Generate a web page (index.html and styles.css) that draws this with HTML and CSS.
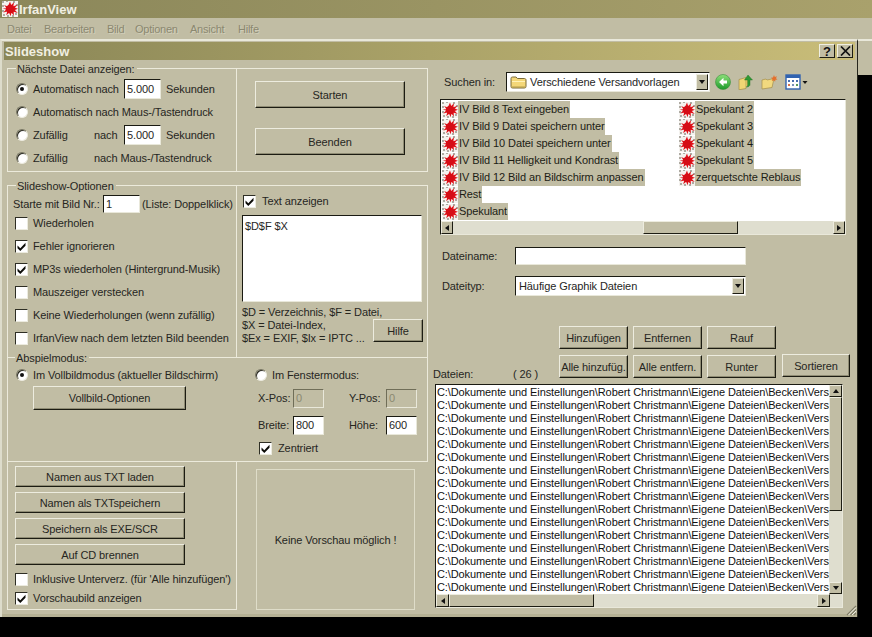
FILE: index.html
```html
<!DOCTYPE html>
<html lang="de">
<head>
<meta charset="utf-8">
<title>IrfanView Slideshow</title>
<link rel="stylesheet" href="styles.css">
</head>
<body>
<svg class="defs" width="0" height="0" aria-hidden="true">
  <defs>
    <symbol id="splat" viewBox="0 0 16 16">
      <rect width="16" height="16" fill="#f4f2ee"/>
      <path fill="#aeaaa2" d="M0 0h2v2H0zM4 0h2v1H4zM11 0h2v2h-2zM14 3h2v2h-2zM0 4h2v2H0zM0 9h2v2H0zM1 13h2v2H1zM13 12h2v2h-2zM5 14h2v2H5zM10 14h2v2h-2z"/>
      <path fill="#e0121a" d="M8 0.500l1.200 3.500 2.800-2.800-.6 4 4-1.400-2.400 3 2.900.9-3 1.200 2.800 3.200-4-1.400.2 3.800-2.400-2.800-1 3.500-1.300-3.500-3 2.600 1-3.800-3.900.9 2.800-2.800L.6 7.600l3.900-.3-2.400-3.400 3.700 1.600z"/>
      <circle cx="8" cy="8" r="4.200" fill="#d50d16"/>
    </symbol>
    <symbol id="tick" viewBox="0 0 11 11">
      <path d="M1.500 4.500l2.800 2.700L9.500 1.800v3L4.300 10 1.500 7.300z" fill="#0c0c08"/>
    </symbol>
    <symbol id="folder" viewBox="0 0 17 16">
      <path d="M1 4.500c0-1 .6-1.500 1.500-1.500h3.600l1.300 1.500h7c.9 0 1.600.6 1.600 1.500v6.500c0 1-.7 1.500-1.600 1.500h-12C1.600 14 1 13.500 1 12.500z" fill="#f4d778" stroke="#7a6a38"/>
      <path d="M2 7h13v1H2z" fill="#fff2b8"/>
      <path d="M2 12.500h13v1H2z" fill="#b39a4a"/>
    </symbol>
  </defs>
</svg>

<div class="screen">
  <header class="appbar">
    <svg class="appicon"><use href="#splat"/></svg>
    <span class="apptitle">IrfanView</span>
  </header>
  <nav class="menu">
    <span class="m-datei">Datei</span>
    <span class="m-bearbeiten">Bearbeiten</span>
    <span class="m-bild">Bild</span>
    <span class="m-optionen">Optionen</span>
    <span class="m-ansicht">Ansicht</span>
    <span>Hilfe</span>
  </nav>

  <div class="stage">
    <section class="dialog">
      <div class="dlgtitle">
        <span class="dlgname">Slideshow</span>
        <div class="dlgbtns">
          <span class="capbtn">?</span>
          <span class="capbtn capx">
            <svg width="11" height="10" viewBox="0 0 11 10"><path d="M1 0.500l9 9M10 0.500l-9 9" stroke="#111" stroke-width="1.700"/></svg>
          </span>
        </div>
      </div>

      <div class="dlgbody">
        <div class="leftcol">
          <!-- Naechste Datei -->
          <div class="group g-next">
            <span class="legend">Nächste Datei anzeigen:</span>
            <div class="cell-l next-rows">
              <div class="row"><span class="radio on"></span><span class="t w91">Automatisch nach</span><span class="field w37">5.000</span><span class="t ml5">Sekunden</span></div>
              <div class="row"><span class="radio"></span><span class="t">Automatisch nach Maus-/Tastendruck</span></div>
              <div class="row"><span class="radio"></span><span class="t w61">Zufällig</span><span class="t w30">nach</span><span class="field w37">5.000</span><span class="t ml5">Sekunden</span></div>
              <div class="row"><span class="radio"></span><span class="t w61">Zufällig</span><span class="t">nach Maus-/Tastendruck</span></div>
            </div>
            <div class="cell-r next-btns">
              <button class="btn big">Starten</button>
              <button class="btn big">Beenden</button>
            </div>
          </div>

          <!-- Optionen -->
          <div class="group g-opts">
            <span class="legend">Slideshow-Optionen</span>
            <div class="cell-l opts-l">
              <div class="startrow"><span class="t w90">Starte mit Bild Nr.:</span><span class="field w37 tall18">1</span><span class="t ml2">(Liste: Doppelklick)</span></div>
              <div class="checks">
                <label class="row"><span class="check"></span><span class="t">Wiederholen</span></label>
                <label class="row"><span class="check"><svg><use href="#tick"/></svg></span><span class="t">Fehler ignorieren</span></label>
                <label class="row"><span class="check"><svg><use href="#tick"/></svg></span><span class="t">MP3s wiederholen (Hintergrund-Musik)</span></label>
                <label class="row"><span class="check"></span><span class="t">Mauszeiger verstecken</span></label>
                <label class="row"><span class="check"></span><span class="t">Keine Wiederholungen (wenn zufällig)</span></label>
                <label class="row"><span class="check"></span><span class="t">IrfanView nach dem letzten Bild beenden</span></label>
              </div>
            </div>
            <div class="cell-r opts-r">
              <label class="row textcheck"><span class="check"><svg><use href="#tick"/></svg></span><span class="t">Text anzeigen</span></label>
              <div class="textarea">$D$F $X</div>
              <div class="helprow">
                <div class="helptext">
                  <div>$D = Verzeichnis, $F = Datei,</div>
                  <div>$X = Datei-Index,</div>
                  <div>$Ex = EXIF, $Ix = IPTC ...</div>
                </div>
                <button class="btn hilfe">Hilfe</button>
              </div>
            </div>
          </div>

          <!-- Abspielmodus -->
          <div class="group g-play">
            <span class="legend legend-play">Abspielmodus:</span>
            <div class="play-l">
              <div class="row"><span class="radio on"></span><span class="t">Im Vollbildmodus (aktueller Bildschirm)</span></div>
              <button class="btn vollbild">Vollbild-Optionen</button>
            </div>
            <div class="play-r">
              <div class="row fenster"><span class="radio"></span><span class="t">Im Fenstermodus:</span></div>
              <div class="posgrid">
                <span class="t">X-Pos:</span><span class="field off">0</span>
                <span class="t second">Y-Pos:</span><span class="field off">0</span>
                <span class="t">Breite:</span><span class="field">800</span>
                <span class="t second">Höhe:</span><span class="field">600</span>
              </div>
              <label class="row zentriert"><span class="check"><svg><use href="#tick"/></svg></span><span class="t">Zentriert</span></label>
            </div>
          </div>

          <!-- Unten -->
          <div class="lower">
            <div class="group g-files">
              <button class="btn wide">Namen aus TXT laden</button>
              <button class="btn wide">Namen als TXTspeichern</button>
              <button class="btn wide">Speichern als EXE/SCR</button>
              <button class="btn wide">Auf CD brennen</button>
              <div class="filechecks">
                <label class="row"><span class="check"></span><span class="t">Inklusive Unterverz. (für 'Alle hinzufügen')</span></label>
                <label class="row"><span class="check"><svg><use href="#tick"/></svg></span><span class="t">Vorschaubild anzeigen</span></label>
              </div>
            </div>
            <div class="preview">Keine Vorschau möglich !</div>
          </div>
        </div>

        <div class="rightcol">
          <div class="searchrow">
            <span class="t searchlabel">Suchen in:</span>
            <div class="combo searchcombo">
              <svg class="cfolder"><use href="#folder"/></svg>
              <span class="t">Verschiedene Versandvorlagen</span>
              <span class="sbtn cbtn"><i class="tri down"></i></span>
            </div>
            <div class="tools">
              <svg class="tool" viewBox="0 0 16 16" width="16" height="16">
                <defs><linearGradient id="gr" x1="0" y1="0" x2="0" y2="1"><stop offset="0" stop-color="#8ee07a"/><stop offset="1" stop-color="#1c9a2a"/></linearGradient></defs>
                <circle cx="8" cy="8" r="7.500" fill="url(#gr)" stroke="#3c8f3c" stroke-width=".6"/>
                <path d="M8.500 3.800L4 8l4.500 4.200V9.600H12V6.400H8.500z" fill="#fff"/>
              </svg>
              <svg class="tool" viewBox="0 0 16 16" width="16" height="16">
                <path d="M1 5.500l7-2v11l-7 1.300z" fill="#f0d674" stroke="#a38e4a" stroke-width=".7"/>
                <path d="M8 3.500h3v8.500H8z" fill="#dcc060"/>
                <path d="M10 1l4.500 5H12v4.500c0 1.500-1.500 2.500-3.500 2.500 1-.8 1.200-1.500 1.200-2.500V6H6.500z" fill="#2f9a34" stroke="#1d6d22" stroke-width=".4"/>
              </svg>
              <svg class="tool" viewBox="0 0 17 16" width="17" height="16">
                <path d="M1 6l4-1 1 1 7-1.500-2 9L1 15z" fill="#f1d97f" stroke="#a38e4a" stroke-width=".7"/>
                <path d="M13 1l.8 2 2.100-.8-.9 2 1.500 1.300-2.100.3-.3 2-1.300-1.500-2 .8.6-2-1.500-1.300 2.100-.2z" fill="#e4702c"/>
              </svg>
              <svg class="views" viewBox="0 0 23 16" width="23" height="16">
                <rect x="1" y="1" width="14" height="14" fill="#fff" stroke="#3163b0" stroke-width="1.400"/>
                <rect x="1" y="1" width="14" height="3" fill="#3163b0"/>
                <path fill="#4a6fb0" d="M3 6h2v2H3zM7 6h2v2H7zM11 6h2v2h-2z"/>
                <path fill="#d8704a" d="M3 10h2v2H3z"/><path fill="#7a90b8" d="M7 10h2v2H7z"/><path fill="#5a9c5a" d="M11 10h2v2h-2z"/>
                <path d="M17.500 7h5l-2.500 3z" fill="#111"/>
              </svg>
            </div>
          </div>

          <div class="filelist">
            <div class="items">
              <div class="item"><svg><use href="#splat"/></svg><span>IV Bild 8 Text eingeben</span></div>
              <div class="item"><svg><use href="#splat"/></svg><span>IV Bild 9 Datei speichern unter</span></div>
              <div class="item"><svg><use href="#splat"/></svg><span>IV Bild 10 Datei speichern unter</span></div>
              <div class="item"><svg><use href="#splat"/></svg><span>IV Bild 11 Helligkeit und Kondrast</span></div>
              <div class="item"><svg><use href="#splat"/></svg><span>IV Bild 12 Bild an Bildschirm anpassen</span></div>
              <div class="item"><svg><use href="#splat"/></svg><span>Rest</span></div>
              <div class="item"><svg><use href="#splat"/></svg><span>Spekulant</span></div>
              <div class="item"><svg><use href="#splat"/></svg><span>Spekulant 2</span></div>
              <div class="item"><svg><use href="#splat"/></svg><span>Spekulant 3</span></div>
              <div class="item"><svg><use href="#splat"/></svg><span>Spekulant 4</span></div>
              <div class="item"><svg><use href="#splat"/></svg><span>Spekulant 5</span></div>
              <div class="item"><svg><use href="#splat"/></svg><span>zerquetschte Reblaus</span></div>
            </div>
            <div class="hbar">
              <span class="sbtn"><i class="tri left"></i></span>
              <span class="track t-a"></span>
              <span class="thumb th-a"></span>
              <span class="track"></span>
              <span class="sbtn"><i class="tri right"></i></span>
            </div>
          </div>

          <div class="namerow"><span class="t namelabel">Dateiname:</span><span class="field namefield"></span></div>
          <div class="typerow">
            <span class="t namelabel">Dateityp:</span>
            <div class="combo typecombo"><span class="t">Häufige Graphik Dateien</span><span class="sbtn cbtn"><i class="tri down"></i></span></div>
          </div>

          <div class="btnrow1">
            <button class="btn act">Hinzufügen</button>
            <button class="btn act">Entfernen</button>
            <button class="btn act">Rauf</button>
          </div>
          <div class="btnrow2">
            <div class="filecount"><span class="t">Dateien:</span><span class="t">( 26 )</span></div>
            <button class="btn act">Alle hinzufüg.</button>
            <button class="btn act">Alle entfern.</button>
            <button class="btn act">Runter</button>
            <button class="btn sort">Sortieren</button>
          </div>

          <div class="pathlist">
            <div class="pathmain">
              <div class="paths">
                <div>C:\Dokumente und Einstellungen\Robert Christmann\Eigene Dateien\Becken\Versandvorlagen</div>
                <div>C:\Dokumente und Einstellungen\Robert Christmann\Eigene Dateien\Becken\Versandvorlagen</div>
                <div>C:\Dokumente und Einstellungen\Robert Christmann\Eigene Dateien\Becken\Versandvorlagen</div>
                <div>C:\Dokumente und Einstellungen\Robert Christmann\Eigene Dateien\Becken\Versandvorlagen</div>
                <div>C:\Dokumente und Einstellungen\Robert Christmann\Eigene Dateien\Becken\Versandvorlagen</div>
                <div>C:\Dokumente und Einstellungen\Robert Christmann\Eigene Dateien\Becken\Versandvorlagen</div>
                <div>C:\Dokumente und Einstellungen\Robert Christmann\Eigene Dateien\Becken\Versandvorlagen</div>
                <div>C:\Dokumente und Einstellungen\Robert Christmann\Eigene Dateien\Becken\Versandvorlagen</div>
                <div>C:\Dokumente und Einstellungen\Robert Christmann\Eigene Dateien\Becken\Versandvorlagen</div>
                <div>C:\Dokumente und Einstellungen\Robert Christmann\Eigene Dateien\Becken\Versandvorlagen</div>
                <div>C:\Dokumente und Einstellungen\Robert Christmann\Eigene Dateien\Becken\Versandvorlagen</div>
                <div>C:\Dokumente und Einstellungen\Robert Christmann\Eigene Dateien\Becken\Versandvorlagen</div>
                <div>C:\Dokumente und Einstellungen\Robert Christmann\Eigene Dateien\Becken\Versandvorlagen</div>
                <div>C:\Dokumente und Einstellungen\Robert Christmann\Eigene Dateien\Becken\Versandvorlagen</div>
                <div>C:\Dokumente und Einstellungen\Robert Christmann\Eigene Dateien\Becken\Versandvorlagen</div>
                <div>C:\Dokumente und Einstellungen\Robert Christmann\Eigene Dateien\Becken\Versandvorlagen</div>
                <div>C:\Dokumente und Einstellungen\Robert Christmann\Eigene Dateien\Becken\Versandvorlagen</div>
              </div>
              <div class="vbar">
                <span class="sbtn"><i class="tri up"></i></span>
                <span class="thumb th-v"></span>
                <span class="track"></span>
                <span class="sbtn"><i class="tri down"></i></span>
              </div>
            </div>
            <div class="hbar hbar2">
              <span class="sbtn"><i class="tri left"></i></span>
              <span class="thumb th-b"></span>
              <span class="track"></span>
              <span class="sbtn"><i class="tri right"></i></span>
              <span class="corner"></span>
            </div>
          </div>
        </div>
      </div>
      <svg class="grip" width="11" height="11" viewBox="0 0 11 11">
        <path d="M10 1L1 10M10 4.500L4.500 10M10 8l-2 2" stroke="#7f7c66" stroke-width="1.200"/>
        <path d="M10 2.500L2.500 10M10 6l-4 4" stroke="#efeee2" stroke-width="1"/>
      </svg>
    </section>
    <div class="backdrop"></div>
  </div>
</div>
</body>
</html>
```

FILE: styles.css
```css
* { box-sizing: border-box; }
html, body { margin: 0; padding: 0; background: #000; }
.defs { position: absolute; }
body { font-family: "Liberation Sans", Arial, sans-serif; font-size: 11px; letter-spacing: -0.1px; color: #26261e; }

.screen { width: 872px; height: 637px; background: #000; overflow: hidden; display: flex; flex-direction: column; }

.appbar { height: 18px; display: flex; align-items: center; padding-left: 2px; background: linear-gradient(90deg, #8b875a, #a9a16c); }
.appicon { width: 16px; height: 16px; flex: none; }
.apptitle { margin-left: 1px; font-weight: bold; font-size: 13px; letter-spacing: 0; color: #f1efe2; }

.menu { height: 21px; display: flex; align-items: center; padding-left: 7px; background: #c1bda4; color: #8b8870; letter-spacing: -0.25px; }
.menu span { text-shadow: 1px 1px 0 #d2cfba; }
.m-datei { width: 37px; }
.m-bearbeiten { width: 63px; }
.m-bild { width: 28px; }
.m-optionen { width: 55px; }
.m-ansicht { width: 48px; }

.stage { flex: 1; display: flex; align-items: flex-start; }
.dialog { position: relative; width: 858px; height: 578px; flex: none; background: #c1bda4; border-top: 2px solid #e9e8da; border-left: 2px solid #dddccb; border-right: 1px solid #26261c; box-shadow: inset 0 -3px 0 #b5b194; }
.backdrop { flex: 1; height: 36px; background: #c1bda4; border-top: 2px solid #e9e8da; }

.dlgtitle { height: 18px; margin: 1px 2px 0 2px; display: flex; align-items: center; justify-content: space-between; padding-left: 1px; background: linear-gradient(90deg, #8b8757, #c9bd79); }
.dlgname { font-weight: bold; font-size: 13px; letter-spacing: 0; color: #f1efe2; }
.dlgbtns { display: flex; gap: 2px; margin-right: 2px; }
.capbtn { width: 16px; height: 14px; display: flex; align-items: center; justify-content: center; background: #c1bda4; border: 1px solid; border-color: #efeee2 #1e1e14 #1e1e14 #efeee2; font-weight: bold; font-size: 13px; color: #111; }

.dlgbody { display: flex; align-items: flex-start; }
.leftcol { width: 421px; flex: none; margin-left: 5px; padding-top: 8px; }
.rightcol { width: 425px; flex: none; margin-left: 5px; }

.group { position: relative; display: flex; border: 1px solid #eceadb; }
.legend { position: absolute; left: 8px; top: -6px; padding: 0 2px 0 1px; height: 13px; line-height: 13px; background: #c1bda4; white-space: nowrap; }
.legend-play { left: 7px; }
.t { white-space: nowrap; line-height: 13px; flex: none; }
.cell-l { width: 229px; flex: none; border-right: 1px solid #eceadb; }
.cell-r { flex: 1; }

.row { display: flex; align-items: center; height: 22px; }
.radio { width: 12px; height: 12px; flex: none; margin-right: 5px; border-radius: 50%; background: #fff; border: 1px solid; border-color: #767460 #ecebdf #ecebdf #767460; box-shadow: inset 1px 1px 0 #2a2a20; display: flex; align-items: center; justify-content: center; }
.radio.on::after { content: ""; width: 4px; height: 4px; border-radius: 50%; background: #111; }
.check { width: 13px; height: 13px; flex: none; margin-right: 5px; background: #fff; border: 1px solid; border-color: #2e2e24 #ecebdf #ecebdf #2e2e24; display: flex; align-items: center; justify-content: center; }
.check svg { width: 11px; height: 11px; }
.field { display: block; flex: none; height: 20px; padding-left: 2px; line-height: 18px; background: #fff; border: 1px solid; border-color: #1a1a12 #e9e8da #e9e8da #1a1a12; }
.field.off { background: #c1bda4; color: #8b8870; border-color: #706e58 #e9e8da #e9e8da #706e58; }

.w91 { width: 91px; } .w61 { width: 61px; } .w30 { width: 30px; } .w37 { width: 37px; } .w90 { width: 90px; }
.ml5 { margin-left: 5px; } .ml2 { margin-left: 2px; }
.tall18 { height: 18px; line-height: 16px; }

.btn { display: block; flex: none; padding: 0; margin: 0; font: inherit; letter-spacing: inherit; color: #26261e; white-space: nowrap; background: #c1bda4; border: 1px solid; border-color: #edecdf #1c1c12 #1c1c12 #edecdf; box-shadow: inset -1px -1px 0 #8f8c74; }

/* group 1 */
.g-next { height: 104px; }
.next-rows { padding: 9px 0 0 8px; display: grid; grid-auto-rows: 22px; row-gap: 1px; align-content: start; }
.next-btns { padding: 12px 0 0 18px; display: flex; flex-direction: column; gap: 20px; }
.big { width: 150px; height: 27px; }

/* group 2 */
.g-opts { height: 172px; margin-top: 13px; border-bottom: 0; }
.opts-l { padding: 9px 0 0 5px; }
.startrow { display: flex; align-items: center; height: 18px; }
.checks { margin: -1px 0 0 2px; display: grid; grid-auto-rows: 23px; }
.checks .row { height: 23px; }
.opts-r { padding: 6px 0 0 5px; }
.textcheck { height: 18px; margin-left: 1px; }
.textcheck .check { margin-right: 6px; }
.textarea { width: 180px; height: 87px; margin-top: 5px; padding: 4px 2px; background: #fff; border: 1px solid; border-color: #1a1a12 #e9e8da #e9e8da #1a1a12; }
.helprow { display: flex; }
.helptext { width: 131px; flex: none; margin-top: 4px; line-height: 13px; white-space: nowrap; }
.hilfe { width: 50px; height: 23px; margin-top: 17px; }

/* group 3 */
.g-play { height: 105px; }
.play-l { width: 247px; flex: none; padding: 8px 0 0 8px; }
.play-l .row { height: 18px; }
.vollbild { width: 153px; height: 24px; margin: 2px 0 0 17px; }
.play-r { flex: 1; padding-top: 8px; }
.fenster { height: 18px; }
.posgrid { display: grid; grid-template-columns: 35px 31px 62px 31px; grid-template-rows: 19px 19px; row-gap: 8px; margin: 5px 0 0 3px; align-items: center; }
.second { margin-left: 25px; }
.posgrid .field { height: 19px; line-height: 17px; }
.zentriert { height: 18px; margin: 4px 0 0 4px; }
.zentriert .check { margin-right: 6px; }

/* group 4 */
.lower { display: flex; align-items: flex-start; }
.g-files { width: 230px; height: 148px; flex: none; border-top: 0; flex-direction: column; padding: 4px 0 0 7px; }
.wide { width: 170px; height: 21px; margin-bottom: 5px; }
.filechecks .row { height: 19px; }
.preview { width: 159px; height: 141px; margin: 7px 0 0 19px; display: flex; align-items: center; justify-content: center; border: 1px solid #dfddc9; }

/* right */
.searchrow { display: flex; align-items: center; height: 20px; margin-top: 12px; }
.searchlabel { width: 62px; margin-left: 11px; }
.combo { position: relative; display: flex; align-items: center; height: 20px; background: #fff; border: 1px solid; border-color: #1a1a12 #e9e8da #e9e8da #1a1a12; padding-left: 3px; }
.searchcombo { width: 204px; flex: none; }
.cfolder { width: 17px; height: 16px; margin-right: 3px; }
.cbtn { margin-left: auto; margin-right: 1px; }
.tools { display: flex; align-items: center; margin-left: 5px; gap: 7px; }
.tool { flex: none; }
.views { flex: none; }

.sbtn { width: 12px; height: 13px; flex: none; display: flex; align-items: center; justify-content: center; background: #c1bda4; border: 1px solid; border-color: #edecdf #1c1c12 #1c1c12 #edecdf; }
.combo .sbtn { height: 16px; width: 12px; }
.tri { display: block; width: 0; height: 0; border-style: solid; border-color: transparent; }
.tri.down { border-width: 4px 3px 0 3px; border-top-color: #111; }
.tri.up { border-width: 0 3px 4px 3px; border-bottom-color: #111; }
.tri.left { border-width: 3px 4px 3px 0; border-right-color: #111; }
.tri.right { border-width: 3px 0 3px 4px; border-left-color: #111; }

.filelist { width: 406px; height: 136px; margin: 7px 0 0 7px; background: #fff; border: 1px solid; border-color: #1a1a12 #e9e8da #e9e8da #1a1a12; display: flex; flex-direction: column; }
.items { height: 121px; padding: 1px 0 0 1px; display: grid; grid-auto-flow: column; grid-template-rows: repeat(7, 17px); grid-template-columns: 237px 160px; }
.item { display: flex; align-items: center; height: 17px; }
.item svg { width: 16px; height: 16px; flex: none; }
.item span { background: #c1bda4; height: 17px; line-height: 17px; padding: 0 1px; white-space: nowrap; color: #1c1c14; }

.hbar { display: flex; height: 13px; background: #dfdecf; }
.track { flex: 1; background: #dfdecf; }
.t-a { flex: none; width: 190px; }
.thumb { background: #c1bda4; border: 1px solid; border-color: #edecdf #1c1c12 #1c1c12 #edecdf; }
.th-a { width: 95px; flex: none; }

.namerow { display: flex; align-items: center; height: 18px; margin-top: 12px; }
.namelabel { width: 73px; margin-left: 9px; }
.namefield { width: 231px; height: 18px; }
.typerow { display: flex; align-items: center; height: 20px; margin-top: 11px; }
.typecombo { width: 231px; flex: none; }

.btnrow1 { display: flex; gap: 5px; height: 23px; margin: 30px 0 0 126px; }
.btnrow2 { display: flex; gap: 5px; height: 23px; margin-top: 6px; }
.act { width: 69px; height: 23px; }
.sort { width: 68px; height: 23px; margin-top: -1px; margin-left: 1px; }
.filecount { width: 121px; flex: none; display: grid; grid-template-columns: 80px auto; align-items: end; height: 26px; }

.pathlist { width: 408px; height: 224px; margin: 6px 0 0 2px; background: #fff; border: 1px solid; border-color: #1a1a12 #e9e8da #e9e8da #1a1a12; display: flex; flex-direction: column; }
.pathmain { display: flex; flex: 1; min-height: 0; }
.paths { flex: 1; min-width: 0; overflow: hidden; padding: 1px 0 0 1px; line-height: 13px; white-space: nowrap; color: #111; }
.vbar { width: 13px; flex: none; display: flex; flex-direction: column; background: #dfdecf; }
.vbar .sbtn { width: 13px; height: 12px; }
.th-v { height: 114px; flex: none; }
.hbar2 .sbtn { width: 13px; }
.th-b { width: 145px; flex: none; }
.corner { width: 12px; background: #dfdecf; }

.grip { position: absolute; right: 0; bottom: 1px; }
```
